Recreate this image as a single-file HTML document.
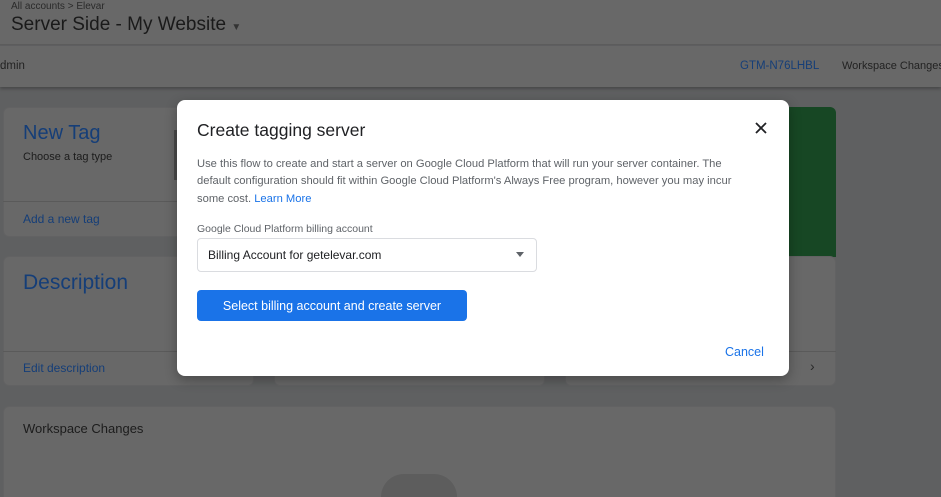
<!DOCTYPE html>
<html><head><meta charset="utf-8"><style>
*{box-sizing:border-box;margin:0;padding:0}
html{width:941px;height:497px;overflow:hidden}
body{width:941px;height:497px;overflow:hidden;background:#5f6061;font-family:"Liberation Sans",Arial,sans-serif;position:relative}
.a{position:absolute}
.card{position:absolute;background:#686868;border:1px solid #626263;border-radius:6px}
.blue{color:#153e78}
</style></head><body>
<div class="a" style="left:0;top:0;width:941px;height:45px;background:#686868;border-bottom:1px solid #5c5c5c"></div>
<div class="a" style="left:11px;top:1px;font-size:10px;color:#2a2a2a">All accounts &gt; Elevar</div>
<div class="a" style="left:11px;top:14px;font-size:19px;color:#1a1a1a">Server Side - My Website <span style="font-size:10px;color:#333">▼</span></div>
<div class="a" style="left:0;top:46px;width:941px;height:41px;background:#686868;box-shadow:0 2px 3px rgba(0,0,0,.25)"></div>
<div class="a" style="left:0;top:60px;font-size:11.5px;color:#222">dmin</div>
<div class="a blue" style="left:740px;top:60px;font-size:11.5px">GTM-N76LHBL</div>
<div class="a" style="left:842px;top:60px;font-size:11px;color:#222;white-space:nowrap">Workspace Changes</div>

<div class="card" style="left:3px;top:107px;width:180px;height:130px"></div>
<div class="a" style="left:3px;top:201px;width:180px;height:1px;background:#5a5a5a"></div>
<div class="a blue" style="left:23px;top:122px;font-size:20px">New Tag</div>
<div class="a" style="left:23px;top:151px;font-size:11px;color:#1c1c1c">Choose a tag type</div>
<div class="a blue" style="left:23px;top:212px;font-size:12px">Add a new tag</div>
<div class="a" style="left:174px;top:130px;width:4px;height:50px;background:#4a4a4a"></div>
<div class="a" style="left:789px;top:107px;width:47px;height:150px;background:#174724;border-radius:0 6px 0 0"></div>

<div class="card" style="left:3px;top:256px;width:251px;height:130px"></div>
<div class="a" style="left:3px;top:351px;width:251px;height:1px;background:#5a5a5a"></div>
<div class="a blue" style="left:23px;top:271px;font-size:21px">Description</div>
<div class="a blue" style="left:23px;top:361px;font-size:12px">Edit description</div>
<div class="card" style="left:274px;top:256px;width:271px;height:130px"></div>
<div class="card" style="left:565px;top:256px;width:271px;height:130px"></div>
<div class="a" style="left:565px;top:351px;width:271px;height:1px;background:#5a5a5a"></div>
<div class="a" style="left:810px;top:358px;font-size:14px;color:#2a2a2a">›</div>

<div class="card" style="left:3px;top:406px;width:833px;height:100px"></div>
<div class="a" style="left:23px;top:421px;font-size:13px;color:#1c1c1c">Workspace Changes</div>
<div class="a" style="left:381px;top:474px;width:76px;height:23px;border-radius:38px 38px 0 0;background:#5d5d5d"></div>

<div class="a" style="left:177px;top:100px;width:612px;height:276px;background:#fff;border-radius:8px;box-shadow:0 4px 12px rgba(0,0,0,.3)">
<div class="a" style="left:20px;top:20px;font-size:17.5px;color:#202124">Create tagging server</div>
<svg class="a" style="left:578px;top:22px" width="12" height="12" viewBox="0 0 12 12"><path d="M1 1L11 11M11 1L1 11" stroke="#202124" stroke-width="1.8"/></svg>
<div class="a" style="left:20px;top:56px;width:548px;font-size:11.2px;line-height:17.3px;color:#5f6368">Use this flow to create and start a server on Google Cloud Platform that will run your server container. The default configuration should fit within Google Cloud Platform's Always Free program, however you may incur some cost. <span style="color:#1a73e8">Learn More</span></div>
<div class="a" style="left:20px;top:123px;font-size:10.5px;color:#5f6368">Google Cloud Platform billing account</div>
<div class="a" style="left:20px;top:138px;width:340px;height:34px;border:1px solid #dadce0;border-radius:4px"></div>
<div class="a" style="left:31px;top:148px;font-size:12px;color:#202124">Billing Account for getelevar.com</div>
<div class="a" style="left:339px;top:152px;width:0;height:0;border-left:4.5px solid transparent;border-right:4.5px solid transparent;border-top:5px solid #5f6368"></div>
<div class="a" style="left:20px;top:190px;width:270px;height:31px;background:#1a73e8;border-radius:4px;color:#fff;font-size:12.5px;text-align:center;line-height:33px">Select billing account and create server</div>
<div class="a" style="left:548px;top:245px;font-size:12.5px;color:#1a73e8">Cancel</div>
</div>
</body></html>
